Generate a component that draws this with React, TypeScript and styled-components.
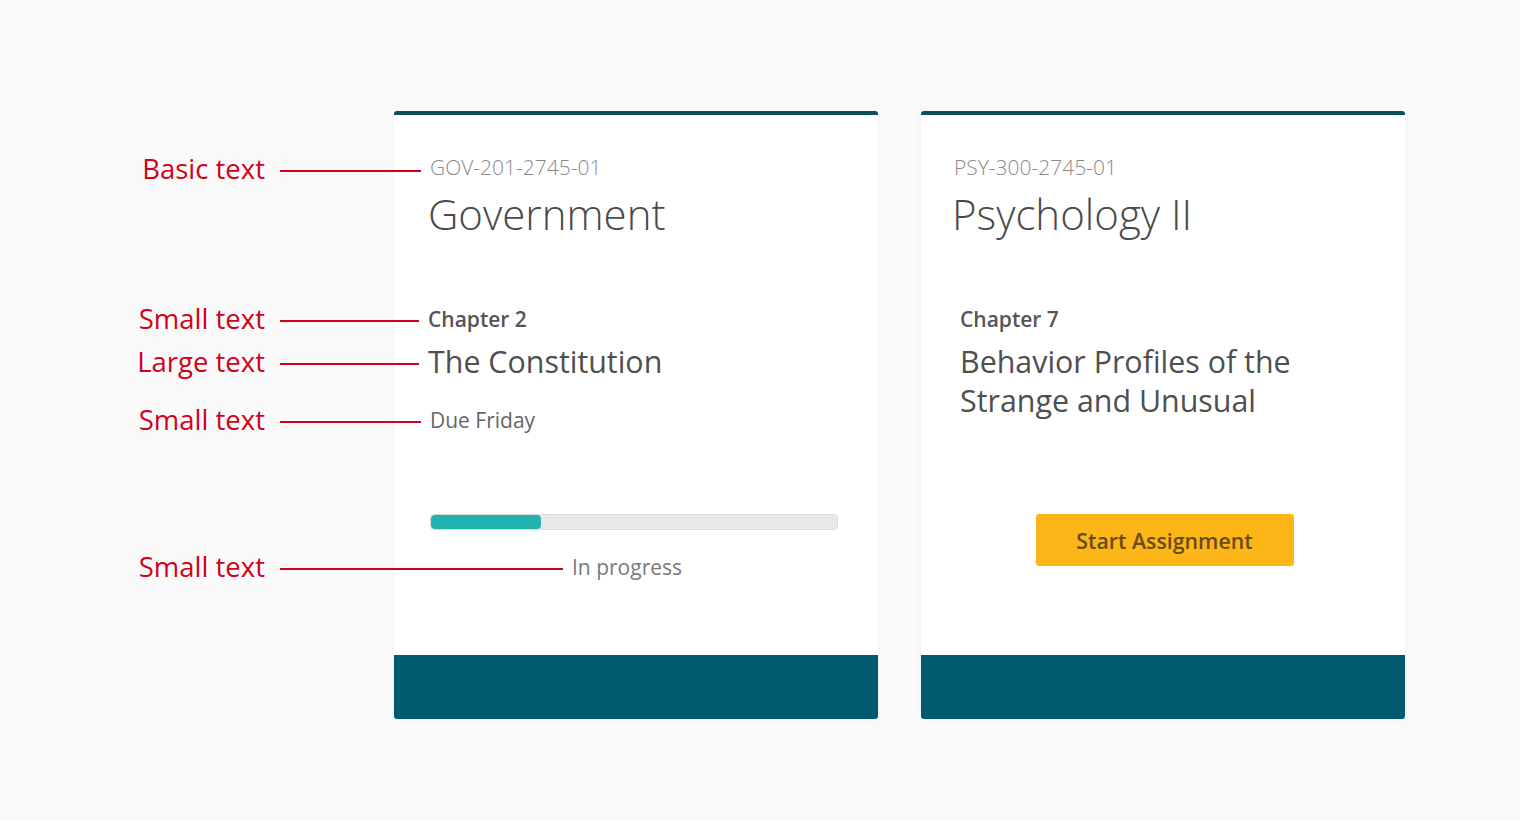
import React from 'react';
import styled, { createGlobalStyle } from 'styled-components';

const GlobalStyle = createGlobalStyle`
  html, body {
    margin: 0;
    padding: 0;
    background: #fafafa;
    font-family: 'Open Sans', 'Liberation Sans', sans-serif;
  }
`;

const Page = styled.div`
  width: 1520px;
  height: 820px;
  box-sizing: border-box;
  padding: 111px 0 0 394px;
  display: flex;
  gap: 43px;
  align-items: flex-start;
`;

const Card = styled.div`
  width: 484px;
  height: 608px;
  box-sizing: border-box;
  display: flex;
  flex-direction: column;
  background: #fff;
  border-top: 4px solid #0c4d5f;
  border-radius: 3px;
  box-shadow: 0 0 6px rgba(0, 0, 0, 0.05);
`;

const Body = styled.div<{ $inset: number }>`
  flex: 1;
  padding: 38px 34px 0 ${p => p.$inset}px;
  display: flex;
  flex-direction: column;
  align-items: flex-start;
`;

const Footer = styled.div`
  height: 64px;
  background: #005a70;
  border-radius: 0 0 3px 3px;
`;

// annotation that hangs off the left edge of the text it points at
const Callout = styled.span<{ $line: number; $drop: number }>`
  position: absolute;
  right: calc(100% + 9px);
  top: calc(50% + ${p => p.$drop}px);
  transform: translateY(-50%);
  display: flex;
  align-items: center;
  gap: 15px;
  white-space: nowrap;
  pointer-events: none;

  &::after {
    content: '';
    display: block;
    width: ${p => p.$line}px;
    height: 2px;
    background: #d0021b;
  }
`;

const CalloutLabel = styled.span`
  position: relative;
  top: -2px;
  font-size: 27.5px;
  line-height: 36px;
  font-weight: 400;
  color: #d0021b;
`;

const Code = styled.div`
  position: relative;
  margin-left: 2px;
  font-size: 21px;
  line-height: 28px;
  font-weight: 300;
  color: #8a8a8a;
`;

const Title = styled.h2`
  margin: 4px 0 0;
  font-size: 42px;
  line-height: 57px;
  font-weight: 300;
  color: #4a4a4a;
`;

const Assignment = styled.div<{ $indent: number }>`
  margin-top: 63px;
  padding-left: ${p => p.$indent}px;
  display: flex;
  flex-direction: column;
  align-items: flex-start;
`;

const Chapter = styled.div`
  position: relative;
  font-size: 21px;
  line-height: 28px;
  font-weight: 600;
  color: #555;
`;

const Heading = styled.div`
  position: relative;
  margin-top: 9px;
  width: 370px;
  font-size: 30.4px;
  line-height: 39px;
  font-weight: 400;
  color: #4f4f4f;
`;

const Due = styled.div`
  position: relative;
  margin: 25px 0 0 2px;
  font-size: 21px;
  line-height: 28px;
  color: #666;
`;

const Track = styled.div`
  margin: 80px 0 0 2px;
  width: 408px;
  height: 16px;
  box-sizing: border-box;
  border: 1px solid #dcdcdc;
  border-radius: 4px;
  background: #e8e8e8;
  overflow: hidden;
`;

const Fill = styled.div`
  height: 100%;
  background: #22b3b0;
  border-radius: 4px;
`;

const Status = styled.div`
  align-self: stretch;
  margin-top: 23px;
  padding-right: 18px;
  text-align: center;
`;

const StatusText = styled.span`
  position: relative;
  display: inline-block;
  font-size: 21px;
  line-height: 28px;
  color: #7a7a7a;
`;

const Actions = styled.div`
  align-self: stretch;
  margin-top: 94px;
  display: flex;
  justify-content: center;
  padding-left: 6px;
`;

const StartButton = styled.button`
  width: 258px;
  height: 52px;
  border: none;
  border-radius: 3px;
  background: #fdb618;
  color: #6b4b10;
  font-family: 'Open Sans', 'Liberation Sans', sans-serif;
  font-size: 21.3px;
  font-weight: 600;
  cursor: pointer;
`;

const Note = ({ label, line, drop = 2 }: { label: string; line: number; drop?: number }) => (
  <Callout $line={line} $drop={drop}>
    <CalloutLabel>{label}</CalloutLabel>
  </Callout>
);

export default function App() {
  const progress = 0.27;

  return (
    <>
      <GlobalStyle />
      <Page>
        <Card>
          <Body $inset={34}>
            <Code>
              <Note label="Basic text" line={141} drop={4} />
              GOV-201-2745-01
            </Code>
            <Title>Government</Title>
            <Assignment $indent={0}>
              <Chapter>
                <Note label="Small text" line={139} />
                Chapter 2
              </Chapter>
              <Heading>
                <Note label="Large text" line={139} />
                The Constitution
              </Heading>
              <Due>
                <Note label="Small text" line={141} />
                Due Friday
              </Due>
            </Assignment>
            <Track>
              <Fill style={{ width: `${progress * 100}%` }} />
            </Track>
            <Status>
              <StatusText>
                <Note label="Small text" line={283} />
                In progress
              </StatusText>
            </Status>
          </Body>
          <Footer />
        </Card>

        <Card>
          <Body $inset={31}>
            <Code>PSY-300-2745-01</Code>
            <Title>Psychology II</Title>
            <Assignment $indent={8}>
              <Chapter>Chapter 7</Chapter>
              <Heading>Behavior Profiles of the Strange and Unusual</Heading>
            </Assignment>
            <Actions>
              <StartButton>Start Assignment</StartButton>
            </Actions>
          </Body>
          <Footer />
        </Card>
      </Page>
    </>
  );
}
